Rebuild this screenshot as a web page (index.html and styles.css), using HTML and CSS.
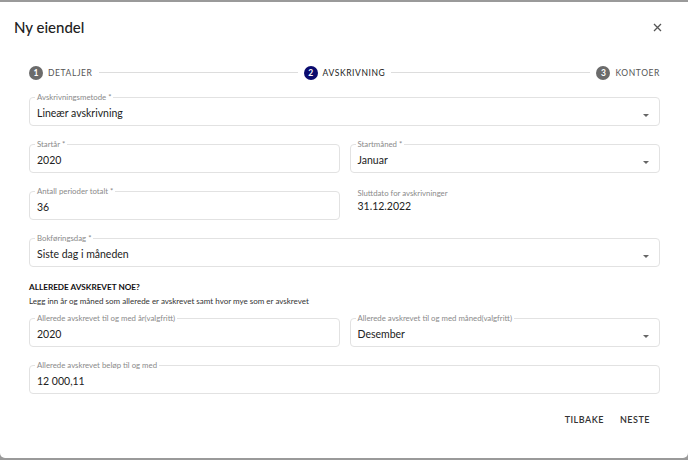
FILE: index.html
```html
<!DOCTYPE html>
<html lang="no">
<head>
  <meta charset="UTF-8" />
  <meta name="viewport" content="width=device-width, initial-scale=1.0" />
  <title>Ny eiendel</title>
  <link rel="stylesheet" href="styles.css">
</head>
<body>
  <div class="dialog">
    <header class="dialog-head">
      <h1>Ny eiendel</h1>
      <button class="close" aria-label="Lukk">
        <svg width="9" height="9" viewBox="0 0 9 9"><path d="M1 1 L8 8 M8 1 L1 8" stroke="#555" stroke-width="1.3" fill="none"/></svg>
      </button>
    </header>

    <div class="content">
      <div class="stepper">
        <div class="step"><span class="dot">1</span><span class="step-label">DETALJER</span></div>
        <div class="step-line"></div>
        <div class="step active"><span class="dot">2</span><span class="step-label">AVSKRIVNING</span></div>
        <div class="step-line"></div>
        <div class="step"><span class="dot">3</span><span class="step-label">KONTOER</span></div>
      </div>

      <div class="form">
        <fieldset class="field select">
          <legend>Avskrivningsmetode *</legend>
          <div class="value">Lineær avskrivning</div>
        </fieldset>

        <div class="row">
          <fieldset class="field">
            <legend>Startår *</legend>
            <div class="value">2020</div>
          </fieldset>
          <fieldset class="field select">
            <legend>Startmåned *</legend>
            <div class="value">Januar</div>
          </fieldset>
        </div>

        <div class="row">
          <fieldset class="field">
            <legend>Antall perioder totalt *</legend>
            <div class="value">36</div>
          </fieldset>
          <div class="readonly">
            <div class="ro-label">Sluttdato for avskrivninger</div>
            <div class="value">31.12.2022</div>
          </div>
        </div>

        <fieldset class="field select">
          <legend>Bokføringsdag *</legend>
          <div class="value">Siste dag i måneden</div>
        </fieldset>

        <div class="section">
          <h2>ALLEREDE AVSKREVET NOE?</h2>
          <p>Legg inn år og måned som allerede er avskrevet samt hvor mye som er avskrevet</p>
        </div>

        <div class="row">
          <fieldset class="field">
            <legend>Allerede avskrevet til og med år(valgfritt)</legend>
            <div class="value">2020</div>
          </fieldset>
          <fieldset class="field select">
            <legend>Allerede avskrevet til og med måned(valgfritt)</legend>
            <div class="value">Desember</div>
          </fieldset>
        </div>

        <fieldset class="field">
          <legend>Allerede avskrevet beløp til og med</legend>
          <div class="value">12 000,11</div>
        </fieldset>
      </div>

      <div class="actions">
        <button class="text-btn">TILBAKE</button>
        <button class="text-btn">NESTE</button>
      </div>
    </div>
  </div>
</body>
</html>
```

FILE: styles.css
```css
* {
  box-sizing: border-box;
  margin: 0;
  padding: 0;
  font-family: Lato, 'Noto Sans', sans-serif;
}
body {
  background-color: #9a9a9a;
  color: #222;
  width: 688px;
  height: 460px;
  overflow: hidden;
}
.dialog {
  margin-top: 2px;
  height: 456px;
  background-color: #fff;
  border-radius: 0 0 5px 5px;
}
.dialog-head {
  display: flex;
  align-items: center;
  justify-content: space-between;
  height: 50px;
  padding: 0 26px 0 14px;
}
.dialog-head h1 {
  font-size: 15px;
  font-weight: 500;
  color: #222;
}
.close {
  background: none;
  border: none;
  display: flex;
  padding: 0;
  margin-top: 1px;
}
.content {
  padding: 0 28px 0 29px;
}
.stepper {
  display: flex;
  align-items: center;
  height: 41px;
}
.step {
  display: flex;
  align-items: center;
  gap: 5px;
}
.dot {
  width: 14px;
  height: 14px;
  border-radius: 50%;
  background-color: #6b6b6b;
  color: #fff;
  font-size: 8.5px;
  font-weight: 700;
  display: flex;
  align-items: center;
  justify-content: center;
}
.step.active .dot {
  background-color: #0b0b6e;
}
.step-label {
  font-size: 8.5px;
  letter-spacing: 0.6px;
  color: #555;
}
.step.active .step-label {
  color: #222;
}
.step-line {
  flex: 1;
  height: 1px;
  background-color: #ddd;
  margin: 0 6px;
}
.form {
  display: flex;
  flex-direction: column;
  gap: 14px;
}
.row {
  display: flex;
  gap: 10px;
}
.row > * {
  flex: 1;
  min-width: 0;
}
.field {
  position: relative;
  height: 33px;
  border: 1px solid #e2e2e2;
  border-radius: 4px;
  padding: 4px 7px 0 7px;
  min-width: 0;
}
.field legend {
  font-size: 7.8px;
  line-height: 8px;
  color: #8a8a8a;
  padding: 0 2px;
  margin-left: -2px;
}
.value {
  font-size: 10.5px;
  line-height: 16px;
  color: #222;
}
.select::after {
  content: '';
  position: absolute;
  right: 10px;
  top: 13px;
  border-left: 3.5px solid transparent;
  border-right: 3.5px solid transparent;
  border-top: 3.5px solid #666;
}
.readonly {
  padding: 2px 8px 0 8px;
}
.ro-label {
  font-size: 7.8px;
  line-height: 8px;
  color: #8a8a8a;
  margin-bottom: 1px;
}
.section {
  margin-top: 1px;
  margin-bottom: -6px;
}
.section h2 {
  font-size: 8.2px;
  font-weight: 700;
  color: #111;
  line-height: 10px;
  margin-bottom: 4px;
}
.section p {
  font-size: 8px;
  line-height: 10px;
  color: #333;
}
.actions {
  display: flex;
  justify-content: flex-end;
  margin-top: 14px;
  padding-right: 2px;
}
.text-btn {
  background: none;
  border: none;
  font-size: 9px;
  font-weight: 600;
  letter-spacing: 0.5px;
  color: #333;
  padding: 6px 8px;
}
```
